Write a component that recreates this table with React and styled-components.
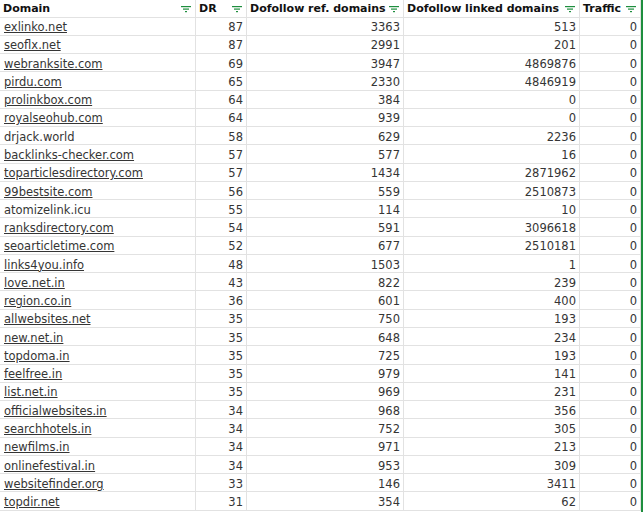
import { Fragment } from 'react';
import styled, { createGlobalStyle } from 'styled-components';

const GlobalStyle = createGlobalStyle`
  html, body {
    margin: 0;
    padding: 0;
    background: #fff;
  }
  body {
    font-family: "DejaVu Sans", "Liberation Sans", sans-serif;
    overflow: hidden;
  }
`;

const rows = [
  ['exlinko.net', 87, 3363, 513, 0, true],
  ['seoflx.net', 87, 2991, 201, 0, true],
  ['webranksite.com', 69, 3947, 4869876, 0, true],
  ['pirdu.com', 65, 2330, 4846919, 0, true],
  ['prolinkbox.com', 64, 384, 0, 0, true],
  ['royalseohub.com', 64, 939, 0, 0, true],
  ['drjack.world', 58, 629, 2236, 0, false],
  ['backlinks-checker.com', 57, 577, 16, 0, true],
  ['toparticlesdirectory.com', 57, 1434, 2871962, 0, true],
  ['99bestsite.com', 56, 559, 2510873, 0, true],
  ['atomizelink.icu', 55, 114, 10, 0, false],
  ['ranksdirectory.com', 54, 591, 3096618, 0, true],
  ['seoarticletime.com', 52, 677, 2510181, 0, true],
  ['links4you.info', 48, 1503, 1, 0, true],
  ['love.net.in', 43, 822, 239, 0, true],
  ['region.co.in', 36, 601, 400, 0, true],
  ['allwebsites.net', 35, 750, 193, 0, true],
  ['new.net.in', 35, 648, 234, 0, true],
  ['topdoma.in', 35, 725, 193, 0, true],
  ['feelfree.in', 35, 979, 141, 0, true],
  ['list.net.in', 35, 969, 231, 0, true],
  ['officialwebsites.in', 34, 968, 356, 0, true],
  ['searchhotels.in', 34, 752, 305, 0, true],
  ['newfilms.in', 34, 971, 213, 0, true],
  ['onlinefestival.in', 34, 953, 309, 0, true],
  ['websitefinder.org', 33, 146, 3411, 0, true],
  ['topdir.net', 31, 354, 62, 0, true],
];

const headers = ['Domain', 'DR', 'Dofollow ref. domains', 'Dofollow linked domains', 'Traffic'];

const Sheet = styled.div`
  display: flex;
  width: 644px;
  height: 512px;
  overflow: hidden;
`;

const Grid = styled.div`
  display: grid;
  grid-template-columns: 196px 51px 157px 176px 61px;
  grid-template-rows: 17.5px;
  grid-auto-rows: 18.27px;
  align-content: start;
`;

const SelectionEdge = styled.div`
  width: 2px;
  height: 512px;
  background: #1e8e3e;
`;

const Cell = styled.div`
  box-sizing: border-box;
  border-right: 1px solid #e2e2e2;
  border-bottom: 1px solid #e2e2e2;
  display: flex;
  align-items: center;
  justify-content: ${(p) => (p.$num ? 'flex-end' : 'flex-start')};
  padding: 2px 3px 0 4px;
  font-size: 11.5px;
  color: #353535;
  white-space: nowrap;
  overflow: hidden;
`;

const HeadCell = styled(Cell)`
  justify-content: space-between;
  font-size: 11px;
  font-weight: bold;
  color: #111;
  padding: 1px 4px 0 3px;
`;

const LinkText = styled.span`
  text-decoration: ${(p) => (p.$link ? 'underline' : 'none')};
  text-underline-offset: 1px;
  color: #353535;
`;

const FilterIcon = () => (
  <svg width="10" height="8" viewBox="0 0 10 8">
    <rect x="0" y="1" width="10" height="1.2" fill="#1e8e3e" />
    <rect x="2" y="3.5" width="6" height="1.2" fill="#1e8e3e" />
    <rect x="4" y="6" width="2" height="1.2" fill="#1e8e3e" />
  </svg>
);

export default function App() {
  return (
    <>
      <GlobalStyle />
      <Sheet>
        <Grid>
          {headers.map((h) => (
            <HeadCell key={h}>
              <span>{h}</span>
              <FilterIcon />
            </HeadCell>
          ))}
          {rows.map(([domain, dr, refs, linked, traffic, link]) => (
            <Fragment key={domain}>
              <Cell>
                <LinkText $link={link}>{domain}</LinkText>
              </Cell>
              <Cell $num>{dr}</Cell>
              <Cell $num>{refs}</Cell>
              <Cell $num>{linked}</Cell>
              <Cell $num>{traffic}</Cell>
            </Fragment>
          ))}
        </Grid>
        <SelectionEdge />
      </Sheet>
    </>
  );
}
